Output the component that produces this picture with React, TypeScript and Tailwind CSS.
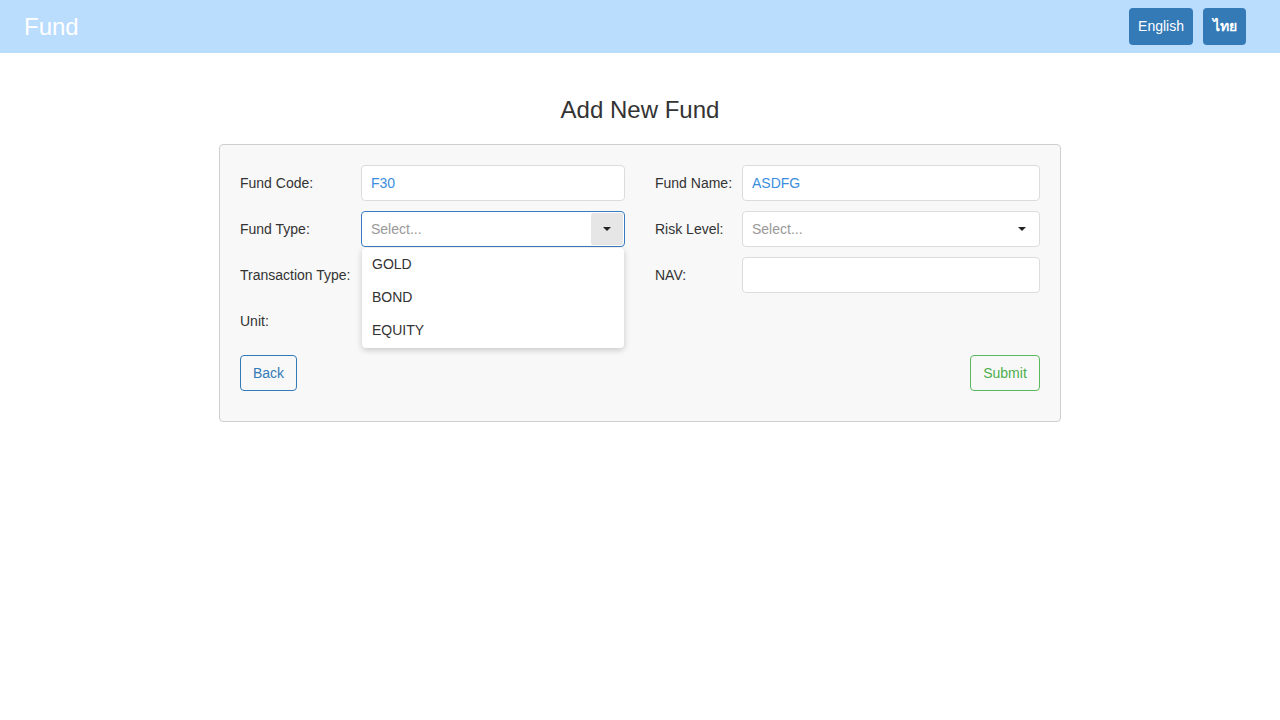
import React from "react";

// Caret used by both selects
function Caret({ className = "" }: { className?: string }) {
  return (
    <svg width="8" height="4" viewBox="0 0 8 4" className={className}>
      <path d="M0 0 L8 0 L4 4 Z" fill="#222" />
    </svg>
  );
}

const fundTypes = ["GOLD", "BOND", "EQUITY"];

function Field({ label, labelWidth, children }: { label: string; labelWidth: string; children?: React.ReactNode }) {
  return (
    <div className="flex items-center h-[36px]">
      <label className={`${labelWidth} shrink-0 text-[14px] text-[#333]`}>{label}</label>
      <div className="flex-1 relative h-[36px]">{children}</div>
    </div>
  );
}

function TextInput({ value }: { value?: string }) {
  return (
    <div className="h-[36px] w-full bg-white border border-[#dcdcdc] rounded-[4px] px-[9px] flex items-center text-[14px] text-[#3b8ede]">
      {value}
    </div>
  );
}

export default function App() {
  return (
    <div className="min-h-[720px] bg-white" style={{ fontFamily: '"Liberation Sans", Arial, sans-serif' }}>
      {/* Top bar */}
      <div className="h-[53px] bg-[#badcfd] flex items-center justify-between pl-[24px] pr-[34px]">
        <span className="text-[24px] text-white leading-none">Fund</span>
        <div className="flex gap-[10px]">
          <button className="h-[37px] px-[9px] rounded-[4px] bg-[#337ab7] text-white text-[14px]">English</button>
          <button className="h-[37px] w-[43px] rounded-[4px] bg-[#337ab7] text-white text-[14px] font-bold">ไทย</button>
        </div>
      </div>

      <h3 className="text-center text-[24px] leading-[26px] text-[#333] mt-[44px] mb-[21px]">Add New Fund</h3>

      <div className="w-[842px] mx-auto bg-[#f8f8f8] border border-[#cfcfcf] rounded-[4px] pt-[20px] px-[20px] pb-[30px]">
        <div className="grid grid-cols-2 gap-x-[30px] gap-y-[10px]">
          <Field label="Fund Code:" labelWidth="w-[121px]">
            <TextInput value="F30" />
          </Field>
          <Field label="Fund Name:" labelWidth="w-[87px]">
            <TextInput value="ASDFG" />
          </Field>

          <Field label="Fund Type:" labelWidth="w-[121px]">
            <div className="h-[36px] w-full bg-white border border-[#3a7bc0] rounded-[4px] pl-[9px] flex items-center text-[14px] text-[#999]">
              <span className="flex-1">Select...</span>
              <div className="h-[32px] w-[32px] mr-[1px] bg-[#e6e6e6] rounded-[2px] flex items-center justify-center">
                <Caret />
              </div>
            </div>
            {/* open menu */}
            <div className="absolute z-10 top-[37px] left-[1px] right-[1px] h-[100px] bg-white rounded-[4px] shadow-[0_2px_6px_rgba(0,0,0,0.2)]">
              {fundTypes.map((t) => (
                <div key={t} className="h-[33px] flex items-center px-[10px] text-[14px] text-[#333]">
                  {t}
                </div>
              ))}
            </div>
          </Field>
          <Field label="Risk Level:" labelWidth="w-[87px]">
            <div className="h-[36px] w-full bg-white border border-[#dcdcdc] rounded-[4px] pl-[9px] pr-[13px] flex items-center text-[14px] text-[#999]">
              <span className="flex-1">Select...</span>
              <Caret />
            </div>
          </Field>

          <Field label="Transaction Type:" labelWidth="w-[121px]" />
          <Field label="NAV:" labelWidth="w-[87px]">
            <TextInput />
          </Field>

          <Field label="Unit:" labelWidth="w-[121px]" />
          <div />
        </div>

        <div className="flex justify-between mt-[16px]">
          <button className="h-[36px] w-[57px] border border-[#337ab7] rounded-[4px] text-[14px] text-[#337ab7]">Back</button>
          <button className="h-[36px] w-[70px] border border-[#5cb85c] rounded-[4px] text-[14px] text-[#4cae4c]">Submit</button>
        </div>
      </div>
    </div>
  );
}
